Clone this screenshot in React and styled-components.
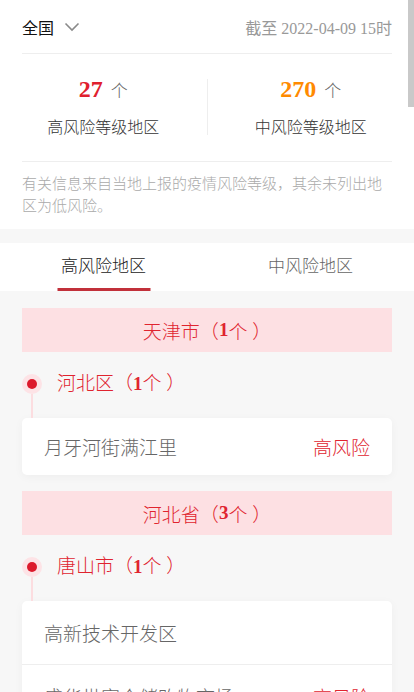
import styled, { createGlobalStyle } from "styled-components";

const GlobalStyle = createGlobalStyle`
  html, body {
    margin: 0;
    padding: 0;
    background: #f7f7f7;
    overflow: hidden;
  }
  body {
    font-family: "Liberation Serif", "Noto Sans CJK SC", serif;
    -webkit-font-smoothing: antialiased;
  }
  * { box-sizing: border-box; }
`;

const RED = "#e0242f";

const Page = styled.div`
  width: 414px;
  min-height: 692px;
  background: #f7f7f7;
`;

const Summary = styled.section`
  background: #fff;
`;

const TopBar = styled.div`
  height: 54px;
  margin: 0 22px;
  display: flex;
  align-items: center;
  justify-content: space-between;
  border-bottom: 1px solid #eeeeee;
`;

const Region = styled.div`
  display: flex;
  align-items: center;
  gap: 10px;
  font-size: 16px;
  color: #111;
`;

const Updated = styled.div`
  font-size: 16px;
  color: #999;
`;

const Stats = styled.div`
  display: grid;
  grid-template-columns: 1fr 1px 1fr;
  align-items: center;
  padding: 22px 0 23px;
`;

const StatDivider = styled.div`
  width: 1px;
  height: 56px;
  background: #eeeeee;
`;

const Stat = styled.div`
  display: flex;
  flex-direction: column;
  align-items: center;
  gap: 12px;
`;

const StatValue = styled.div`
  display: flex;
  align-items: baseline;
  gap: 8px;
  height: 26px;
`;

const Num = styled.span`
  font-size: 24px;
  font-weight: bold;
  color: ${(p) => p.$color};
`;

const Unit = styled.span`
  font-size: 17px;
  color: #666;
  font-weight: 300;
`;

const StatLabel = styled.div`
  font-size: 16px;
  color: #333;
  font-weight: 300;
`;

const Note = styled.p`
  margin: 0 22px;
  padding: 11px 0 12px;
  border-top: 1px solid #eeeeee;
  font-size: 15px;
  line-height: 22px;
  color: #aaa;
  font-weight: 300;
`;

const Tabs = styled.nav`
  margin-top: 14px;
  height: 48px;
  background: #fff;
  display: grid;
  grid-template-columns: 1fr 1fr;
`;

const Tab = styled.div`
  position: relative;
  display: flex;
  align-items: center;
  justify-content: center;
  padding-bottom: 5px;
  font-size: 17px;
  font-weight: 300;
  color: ${(p) => (p.$active ? "#222" : "#666")};
  &::after {
    content: "";
    display: ${(p) => (p.$active ? "block" : "none")};
    position: absolute;
    bottom: 0;
    left: 50%;
    transform: translateX(-50%);
    width: 93px;
    height: 3px;
    background: #c1303a;
  }
`;

const List = styled.div`
  padding: 17px 22px 0;
  display: flex;
  flex-direction: column;
`;

const Province = styled.div`
  height: 44px;
  background: #fde0e3;
  color: ${RED};
  font-size: 19px;
  font-weight: 300;
  display: flex;
  align-items: center;
  justify-content: center;
  margin-bottom: 16px;
`;

const City = styled.div`
  position: relative;
  height: 50px;
  display: flex;
  align-items: flex-start;
  padding-left: 35px;
  font-size: 19px;
  font-weight: 300;
  color: ${RED};
  line-height: 32px;
  &::before {
    content: "";
    position: absolute;
    left: 0;
    top: 6px;
    width: 20px;
    height: 20px;
    border-radius: 50%;
    background: #fde3e6;
  }
  &::after {
    content: "";
    position: absolute;
    left: 5px;
    top: 11px;
    width: 10px;
    height: 10px;
    border-radius: 50%;
    background: #dc1a2c;
  }
`;

const Stem = styled.span`
  position: absolute;
  left: 9px;
  top: 26px;
  bottom: 0;
  width: 2px;
  background: #fcdde0;
`;

const Bold = styled.b`
  font-weight: bold;
`;

const Card = styled.div`
  background: #fff;
  border-radius: 5px;
  box-shadow: 0 2px 10px rgba(0, 0, 0, 0.04);
  margin-bottom: 16px;
`;

const Row = styled.div`
  height: ${(p) => p.$h}px;
  display: flex;
  align-items: center;
  justify-content: space-between;
  padding: 0 22px;
  font-size: 19px;
  font-weight: 300;
  color: #666;
  & + & {
    border-top: 1px solid #eeeeee;
  }
`;

const Level = styled.span`
  color: ${RED};
`;

const Thumb = styled.div`
  position: fixed;
  top: 0;
  right: 0;
  width: 6px;
  height: 107px;
  background: #c9c9c9;
`;

const Chevron = () => (
  <svg width="16" height="10" viewBox="0 0 16 10" fill="none">
    <path d="M1.5 1.5 L8 8 L14.5 1.5" stroke="#8a8a8a" strokeWidth="1.6" />
  </svg>
);

const Count = ({ name, n }) => (
  <>
    {name}（ <Bold>{n}</Bold>个 ）
  </>
);

const data = [
  {
    province: "天津市",
    count: 1,
    cities: [
      { name: "河北区", count: 1, h: 57, places: [["月牙河街满江里", "高风险"]] },
    ],
  },
  {
    province: "河北省",
    count: 3,
    cities: [
      {
        name: "唐山市",
        count: 1,
        h: 63,
        places: [
          ["高新技术开发区", ""],
          ["盛华世家仓储购物市场", "高风险"],
        ],
      },
    ],
  },
];

export default function App() {
  return (
    <Page>
      <GlobalStyle />
      <Summary>
        <TopBar>
          <Region>
            全国 <Chevron />
          </Region>
          <Updated>截至 2022-04-09 15时</Updated>
        </TopBar>
        <Stats>
          <Stat>
            <StatValue>
              <Num $color="#e0202e">27</Num>
              <Unit>个</Unit>
            </StatValue>
            <StatLabel>高风险等级地区</StatLabel>
          </Stat>
          <StatDivider />
          <Stat>
            <StatValue>
              <Num $color="#ff8a00">270</Num>
              <Unit>个</Unit>
            </StatValue>
            <StatLabel>中风险等级地区</StatLabel>
          </Stat>
        </Stats>
        <Note>有关信息来自当地上报的疫情风险等级，其余未列出地区为低风险。</Note>
      </Summary>
      <Tabs>
        <Tab $active>高风险地区</Tab>
        <Tab>中风险地区</Tab>
      </Tabs>
      <List>
        {data.map((p) => (
          <div key={p.province}>
            <Province>
              <Count name={p.province} n={p.count} />
            </Province>
            {p.cities.map((c) => (
              <div key={c.name}>
                <City>
                  <Stem />
                  <Count name={c.name} n={c.count} />
                </City>
                <Card>
                  {c.places.map(([place, level]) => (
                    <Row key={place} $h={c.h}>
                      <span>{place}</span>
                      <Level>{level}</Level>
                    </Row>
                  ))}
                </Card>
              </div>
            ))}
          </div>
        ))}
      </List>
      <Thumb />
    </Page>
  );
}
